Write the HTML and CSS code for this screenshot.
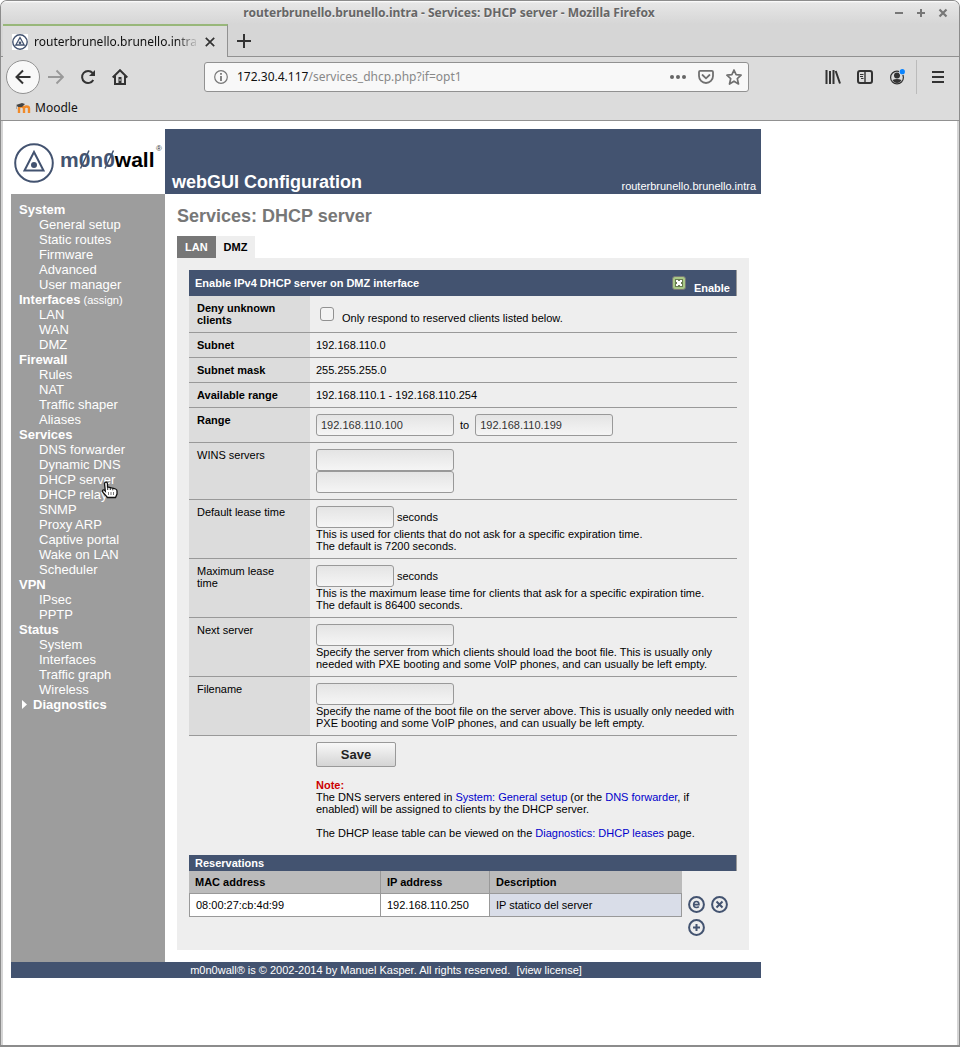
FILE: index.html
```html
<!DOCTYPE html>
<html lang="en">
<head>
<meta charset="utf-8">
<title>routerbrunello.brunello.intra - Services: DHCP server</title>
<link rel="stylesheet" href="styles.css">
</head>
<body>
<div class="window">
  <header class="chrome">
    <div class="titlebar">
      <span class="window-title">routerbrunello.brunello.intra - Services: DHCP server - Mozilla Firefox</span>
      <div class="window-buttons">
        <button type="button" aria-label="Minimize"><svg width="10" height="10" viewBox="0 0 10 10"><path d="M1 5h8" stroke="#777" stroke-width="2"/></svg></button>
        <button type="button" aria-label="Maximize"><svg width="10" height="10" viewBox="0 0 10 10"><path d="M1 5h8M5 1v8" stroke="#777" stroke-width="2"/></svg></button>
        <button type="button" aria-label="Close"><svg width="10" height="10" viewBox="0 0 10 10"><path d="M1.500 1.500l7 7M8.500 1.500l-7 7" stroke="#777" stroke-width="2.200"/></svg></button>
      </div>
    </div>
    <div class="tabstrip">
      <div class="browser-tab">
        <svg width="16" height="16" viewBox="0 0 16 16"><rect width="16" height="16" fill="#fff"/><circle cx="8" cy="8" r="7.200" fill="#fff" stroke="#435370" stroke-width="1.400"/><path d="M8 3.500L12.200 11H3.800z" fill="none" stroke="#435370" stroke-width="1.300"/><circle cx="8" cy="8.800" r="1.400" fill="#435370"/></svg>
        <span class="browser-tab-label">routerbrunello.brunello.intra -</span>
        <button type="button" aria-label="Close tab"><svg width="10" height="10" viewBox="0 0 10 10"><path d="M.8.8l8.400 8.400M9.200.8L.8 9.200" stroke="#333" stroke-width="1.700"/></svg></button>
      </div>
      <button class="new-tab" type="button" aria-label="New tab"><svg width="14" height="14" viewBox="0 0 14 14"><path d="M0 7h14M7 0v14" stroke="#333" stroke-width="2"/></svg></button>
    </div>
    <div class="navbar">
      <div class="nav-buttons">
        <button class="back" type="button" aria-label="Back"><svg width="16" height="16" viewBox="0 0 16 16" fill="none" stroke="#333" stroke-width="2"><path d="M15.500 8H1.500M8 1.500L1.500 8 8 14.500"/></svg></button>
        <button type="button" aria-label="Forward"><svg width="16" height="16" viewBox="0 0 16 16" fill="none" stroke="#999" stroke-width="1.900"><path d="M0 8h14.500M8.500 1.500L15 8l-6.500 6.500"/></svg></button>
        <button type="button" aria-label="Reload"><svg width="16" height="16" viewBox="0 0 16 16"><path d="M13.300 11A6 6 0 1 1 12.600 4" fill="none" stroke="#333" stroke-width="2"/><path d="M15 1v6H9z" fill="#333"/></svg></button>
        <button type="button" aria-label="Home"><svg width="16" height="16" viewBox="0 0 16 16"><path d="M.7 8.500L8 1.200l7.300 7.300M3 7v8h10V7" fill="none" stroke="#333" stroke-width="2"/><path d="M6.500 8h3v6.500h-3z" fill="#333"/><path d="M8 10v2" stroke="#ddd"/></svg></button>
      </div>
      <div class="urlbar">
        <svg width="14" height="14" viewBox="0 0 14 14"><circle cx="7" cy="7" r="6.300" fill="none" stroke="#777" stroke-width="1.200"/><path d="M7 6v5M7 3v1.700" stroke="#666" stroke-width="1.600"/></svg>
        <a class="url" href="#"><span>172.30.4.117</span>/services_dhcp.php?if=opt1</a>
        <svg width="16" height="16" viewBox="0 0 16 16" fill="#666"><circle cx="2" cy="8" r="2"/><circle cx="8" cy="8" r="2"/><circle cx="14" cy="8" r="2"/></svg>
        <svg width="16" height="16" viewBox="0 0 16 16" fill="none" stroke="#707070" stroke-width="1.800"><path d="M2.200 1.900h11.600q1.200 0 1.200 1.200V7a7 7 0 0 1-14 0V3.100q0-1.200 1.200-1.200z"/><path d="M4.500 6L8 9.300 11.500 6" stroke-linecap="round"/></svg>
        <svg width="16" height="16" viewBox="0 0 16 16" fill="none" stroke="#707070" stroke-width="1.700" stroke-linejoin="round"><path d="M8 1l2.100 4.700 5 .5-3.800 3.400L12.500 15 8 12.200 3.500 15l1.200-5.400L.9 6.200l5-.5z"/></svg>
      </div>
      <div class="tool-buttons">
        <button type="button" aria-label="Library"><svg width="16" height="16" viewBox="0 0 16 16"><path d="M1.500 1v14M5 2v13M8.500 1v14M10.700 2L15 14.500" fill="none" stroke="#333" stroke-width="2"/></svg></button>
        <button type="button" aria-label="Sidebars"><svg width="16" height="16" viewBox="0 0 16 16" fill="none" stroke="#333"><rect x="1" y="2" width="14" height="12" rx="2" stroke-width="2"/><path d="M8 2v12" stroke-width="1.400"/><path d="M3 5.500h3.500M3 7.500h3M4 9.500h2.500"/></svg></button>
        <button type="button" aria-label="Account"><svg width="16" height="16" viewBox="0 0 16 16"><circle cx="8" cy="8.500" r="6.400" fill="none" stroke="#333" stroke-width="1.200"/><circle cx="8" cy="6.500" r="3" fill="#333"/><path d="M3.500 11q4.500-2 9 0-1.500 3-4.500 3T3.500 11z" fill="#333"/><circle cx="13.300" cy="2.700" r="3.300" fill="#ddd"/><circle cx="13.300" cy="2.700" r="2.600" fill="#0a84ff"/></svg></button>
        <button class="menu" type="button" aria-label="Menu"><svg width="12" height="12" viewBox="0 0 12 12"><path d="M0 1h12M0 6h12M0 11h12" stroke="#333" stroke-width="2"/></svg></button>
      </div>
    </div>
    <div class="bookmarks">
      <a href="#"><svg width="16" height="12" viewBox="0 0 16 12"><path d="M4 11V6.500q0-2 2.300-2T9 6.500V11M9 6.500q0-2 2.500-2t2.500 2V11" fill="none" stroke="#f08a2a" stroke-width="2.400"/><path d="M1 3l6-2 3 1-3 3H3z" fill="#444"/><path d="M1.500 3v4" stroke="#aaa"/></svg>Moodle</a>
    </div>
  </header>

  <div class="page">
    <div class="site">
      <div class="logo">
        <svg width="150" height="44" viewBox="0 0 150 44" role="img" aria-label="m0n0wall">
          <circle cx="20" cy="23" r="18.800" fill="#fff" stroke="#435370" stroke-width="2"/>
          <path d="M20 12L29.500 30.500H10.500z" fill="none" stroke="#435370" stroke-width="2"/>
          <circle cx="20" cy="25" r="3" fill="#435370"/>
          <text class="logo-text" x="46" y="27"><tspan fill="#435370">m0n0</tspan><tspan>wall</tspan></text>
          <path d="M66.500 28.500l8.500-18M91 28.500l8.500-18" stroke="#435370" stroke-width="1.500"/>
          <text class="logo-mark" x="142" y="11">®</text>
        </svg>
      </div>
      <div class="banner"><span class="banner-title">webGUI Configuration</span><span class="hostname">routerbrunello.brunello.intra</span></div>

      <nav class="sidebar">
        <strong>System</strong>
        <ul><li><a href="#">General setup</a></li><li><a href="#">Static routes</a></li><li><a href="#">Firmware</a></li><li><a href="#">Advanced</a></li><li><a href="#">User manager</a></li></ul>
        <strong>Interfaces</strong><a class="assign" href="#">&nbsp;(assign)</a>
        <ul><li><a href="#">LAN</a></li><li><a href="#">WAN</a></li><li><a href="#">DMZ</a></li></ul>
        <strong>Firewall</strong>
        <ul><li><a href="#">Rules</a></li><li><a href="#">NAT</a></li><li><a href="#">Traffic shaper</a></li><li><a href="#">Aliases</a></li></ul>
        <strong>Services</strong>
        <ul><li><a href="#">DNS forwarder</a></li><li><a href="#">Dynamic DNS</a></li>
          <li class="pointed"><a href="#">DHCP server</a><svg class="pointer" width="18" height="18" viewBox="0 0 18 18"><path d="M3.500 2.500Q4 1 5.200 1.200T6.500 3v3l2 .3 2 .6 2 .5 2 .6q1.500.5 1.500 2V13l-1.500 3.500h-8L2 11.500Q1 9.500 2 9t2.300 1z" fill="#fff" stroke="#111" stroke-width="1.300"/><path d="M7.500 11v3M10 11v3M12.500 11v3" stroke="#666" stroke-width=".9"/><path d="M6.700 6v3M9.300 6.500V9M11.800 7.300v2" stroke="#111" stroke-width=".9"/></svg></li>
          <li><a href="#">DHCP relay</a></li><li><a href="#">SNMP</a></li><li><a href="#">Proxy ARP</a></li><li><a href="#">Captive portal</a></li><li><a href="#">Wake on LAN</a></li><li><a href="#">Scheduler</a></li></ul>
        <strong>VPN</strong>
        <ul><li><a href="#">IPsec</a></li><li><a href="#">PPTP</a></li></ul>
        <strong>Status</strong>
        <ul><li><a href="#">System</a></li><li><a href="#">Interfaces</a></li><li><a href="#">Traffic graph</a></li><li><a href="#">Wireless</a></li></ul>
        <a class="diagnostics" href="#"><svg width="11" height="9" viewBox="0 0 11 9"><path d="M3 0l5 4.500L3 9z" fill="#fff"/></svg><strong>Diagnostics</strong></a>
      </nav>

      <main class="content">
        <h1>Services: DHCP server</h1>
        <div class="tabs"><a href="#">LAN</a><a class="active" href="#">DMZ</a></div>
        <form class="panel">
          <table class="settings">
            <thead>
              <tr><th colspan="2"><div class="section"><span>Enable IPv4 DHCP server on DMZ interface</span><label class="enable"><input type="checkbox" checked><span>Enable</span></label></div></th></tr>
            </thead>
            <tbody>
              <tr><th class="required">Deny unknown clients</th><td><label class="deny"><input type="checkbox"><span>Only respond to reserved clients listed below.</span></label></td></tr>
              <tr><th class="required">Subnet</th><td>192.168.110.0</td></tr>
              <tr><th class="required">Subnet mask</th><td>255.255.255.0</td></tr>
              <tr><th class="required">Available range</th><td>192.168.110.1 - 192.168.110.254</td></tr>
              <tr><th class="required"><label for="from">Range</label></th><td><div class="line range"><input class="field" id="from" type="text" value="192.168.110.100"><label for="to">to</label><input class="field" id="to" type="text" value="192.168.110.199"></div></td></tr>
              <tr><th><label for="wins1">WINS servers</label></th><td><div class="line"><input class="field" id="wins1" type="text"></div><div class="line"><input class="field" type="text" aria-label="Second WINS server"></div></td></tr>
              <tr><th><label for="deftime">Default lease time</label></th><td><div class="line"><input class="field short" id="deftime" type="text">seconds</div>This is used for clients that do not ask for a specific expiration time.<br>The default is 7200 seconds.</td></tr>
              <tr><th><label for="maxtime">Maximum lease time</label></th><td><div class="line"><input class="field short" id="maxtime" type="text">seconds</div>This is the maximum lease time for clients that ask for a specific expiration time.<br>The default is 86400 seconds.</td></tr>
              <tr><th><label for="next">Next server</label></th><td><div class="line"><input class="field" id="next" type="text"></div>Specify the server from which clients should load the boot file. This is usually only needed with PXE booting and some VoIP phones, and can usually be left empty.</td></tr>
              <tr><th><label for="file">Filename</label></th><td><div class="line"><input class="field" id="file" type="text"></div>Specify the name of the boot file on the server above. This is usually only needed with PXE booting and some VoIP phones, and can usually be left empty.</td></tr>
            </tbody>
          </table>
          <div class="actions">
            <button class="save" type="button">Save</button>
            <p><strong class="note">Note:</strong><br>The DNS servers entered in <a href="#">System: General setup</a> (or the <a href="#">DNS forwarder</a>, if enabled) will be assigned to clients by the DHCP server.</p>
            <p>The DHCP lease table can be viewed on the <a href="#">Diagnostics: DHCP leases</a> page.</p>
          </div>
          <table class="reservations">
            <colgroup><col class="mac"><col class="ip"><col><col class="tools"></colgroup>
            <thead>
              <tr><th class="caption" colspan="4">Reservations</th></tr>
              <tr class="heads"><th>MAC address</th><th>IP address</th><th>Description</th><td></td></tr>
            </thead>
            <tbody>
              <tr class="entry"><td>08:00:27:cb:4d:99</td><td>192.168.110.250</td><td class="description">IP statico del server</td>
                <td class="icons"><div>
                  <a href="#" aria-label="Edit"><svg width="17" height="17" viewBox="0 0 17 17" fill="none" stroke="#435370" stroke-width="2"><circle cx="8.500" cy="8.500" r="7.400"/><path d="M5.500 8.600h5.400Q11 5.500 8.400 5.500T5.700 8.500t2.800 3q1.500 0 2.300-1.100" stroke-width="1.700"/></svg></a>
                  <a href="#" aria-label="Delete"><svg width="17" height="17" viewBox="0 0 17 17" fill="none" stroke="#435370" stroke-width="2"><circle cx="8.500" cy="8.500" r="7.400"/><path d="M5.500 5.500l6 6M11.500 5.500l-6 6"/></svg></a>
                </div></td></tr>
              <tr><td colspan="3"></td>
                <td class="icons add"><div><a href="#" aria-label="Add"><svg width="17" height="17" viewBox="0 0 17 17" fill="none" stroke="#435370" stroke-width="2"><circle cx="8.500" cy="8.500" r="7.400"/><path d="M5 8.500h7M8.500 5v7"/></svg></a></div></td></tr>
            </tbody>
          </table>
        </form>
      </main>
      <footer>m0n0wall® is © 2002-2014 by Manuel Kasper. All rights reserved. &nbsp;<a href="#">[view license]</a></footer>
    </div>
  </div>
</div>
</body>
</html>
```
FILE: styles.css
```css
* { box-sizing: border-box; }
html, body { height: 100%; }
body { margin: 0; background: #fff; color: #000; font: 11px/12px "Liberation Sans", Arial, sans-serif; }
button { border: 0; padding: 0; background: none; display: flex; align-items: center; justify-content: center; }
svg { display: block; flex: none; }
a { text-decoration: none; }

.window { min-height: 100%; display: flex; flex-direction: column; border: 1px solid #8c8c8c; border-bottom-width: 2px; border-radius: 7px 7px 0 0; background: #d5d5d5; overflow: hidden; }
.chrome { font: 12px/18px "Noto Sans", sans-serif; background: #dcdcdc; border-bottom: 1px solid #919191; }

.titlebar { height: 23px; display: flex; align-items: center; padding: 0 11px 0 3px; background: linear-gradient(#fff, #e6e6e6 2px, #d6d6d6); }
.window-title { flex: 1; text-align: center; font-weight: 700; color: #666; text-shadow: 0 1px #eee; }
.window-buttons { display: flex; gap: 12px; }

.tabstrip { height: 33px; display: flex; background: linear-gradient(#919191, #919191) bottom / 100% 1px no-repeat #d6d6d6; padding-left: 2px; }
.browser-tab { width: 225px; display: flex; align-items: center; gap: 6px; padding: 0 12px 0 9px; background: #dcdcdc; border-top: 2px solid #98b77a; border-right: 1px solid #919191; }
.browser-tab-label { flex: 1; overflow: hidden; white-space: nowrap; color: #111; -webkit-mask-image: linear-gradient(to right, #000 86%, transparent); mask-image: linear-gradient(to right, #000 86%, transparent); }
.new-tab { width: 32px; }

.navbar { height: 40px; display: flex; align-items: center; padding: 0 15px 0 5px; }
.nav-buttons { display: flex; align-items: center; gap: 16px; width: 198px; flex: none; }
.back { width: 34px; height: 34px; border: 1px solid #919191; border-radius: 50%; background: #f8f8f8; }
.back + button { margin-left: -8px; }
.urlbar { flex: 1; height: 30px; display: flex; align-items: center; gap: 12px; padding: 0 6px 0 9px; background: #f8f8f8; border: 1px solid #919191; border-radius: 3px; }
.url { flex: 1; margin-left: -3px; color: #888; }
.url span { color: #111; }
.tool-buttons { flex: none; width: 195px; display: flex; align-items: center; justify-content: flex-end; gap: 16px; }
.menu { height: 34px; margin-left: -5px; padding-left: 15px; border-left: 1px solid #bbb; }
.bookmarks { height: 23px; padding: 2px 14px; }
.bookmarks a { display: inline-flex; align-items: center; gap: 4px; color: #111; }

.page { flex: 1; margin: 0 2px; padding: 8px; background: #fff; }
.site { max-width: 750px; display: grid; grid-template-columns: 154px 1fr; grid-template-rows: 65px auto auto; }
.logo { padding: 11px 0 0 3px; }
.logo-text { font: 700 21px "Liberation Sans", Arial, sans-serif; }
.logo-mark { font-size: 8px; fill: #333; }
.banner { display: flex; align-items: flex-end; justify-content: space-between; padding: 0 5px 1px 7px; background: #435370; color: #fff; }
.banner-title { font-size: 18px; line-height: 22px; font-weight: 700; }
.hostname { line-height: 14px; }

.sidebar { padding: 8px; background: #9d9d9d; color: #fff; font-size: 13px; line-height: 15px; }
.sidebar ul { margin: 0; padding: 0 0 0 20px; list-style: none; }
.sidebar a { color: #fff; }
.sidebar .assign { font-size: 11px; line-height: 11px; }
.diagnostics { display: flex; align-items: center; gap: 3px; }
.pointed { position: relative; }
.pointer { position: absolute; left: 62px; top: 9px; z-index: 1; }

.content { padding: 12px; }
h1 { margin: 0 0 10px; font-size: 18px; line-height: 20px; color: #777; }
.tabs { display: flex; font-weight: 700; }
.tabs a { padding: 5px 8px; background: #777; color: #fff; }
.tabs .active { background: #eee; color: #000; }
.panel { padding: 12px; background: #eee; }

table { width: 100%; border-collapse: separate; border-spacing: 0; table-layout: fixed; }
th, td { text-align: left; vertical-align: top; }
.settings { display: grid; }
.settings thead, .settings tbody, .settings thead tr, .settings thead th { display: block; padding: 0; }
.settings tbody tr { display: grid; grid-template-columns: 121px 1fr; }
.section { height: 26px; display: flex; align-items: center; justify-content: space-between; padding: 0 6px; background: #435370; color: #fff; border-right: 1px solid #999; }
.settings tbody th { padding: 6px 24px 6px 8px; background: #dcdcdc; border-bottom: 1px solid #999; font-weight: 400; }
.settings tbody .required { font-weight: 700; }
.settings tbody td { padding: 6px 0 6px 6px; border-bottom: 1px solid #999; }

input[type="checkbox"] { appearance: none; margin: 0; width: 14px; height: 14px; border: 1px solid #919191; border-radius: 3px; background: #f3f3f3; flex: none; }
.enable { display: flex; align-items: flex-end; gap: 8px; }
.enable input { margin-bottom: 1px; }
.enable span { margin-bottom: -3px; }
.enable input:checked { border-color: #777; background: linear-gradient(45deg, transparent 34%, #fff 34% 66%, transparent 66%) center / 6px 6px no-repeat, linear-gradient(-45deg, transparent 34%, #fff 34% 66%, transparent 66%) center / 6px 6px no-repeat, linear-gradient(#697c52, #697c52) center / 8px 8px no-repeat, #a9c886; }
.deny { display: flex; align-items: flex-end; gap: 8px; height: 22px; padding-left: 4px; }
.deny input { margin-bottom: 3px; }
.line { display: flex; align-items: center; gap: 3px; }
.range { gap: 6px; }
.field { width: 138px; height: 22px; margin: 0; padding: 0 4px; border: 1px solid #999; border-radius: 3px; background: linear-gradient(#e4e4e4, #f5f5f5); color: #333; font: inherit; }
.short { width: 78px; }

.actions { padding: 6px 6px 16px 127px; }
.save { width: 80px; height: 25px; border: 1px solid #999; border-radius: 2px; background: linear-gradient(#f8f8f8, #d4d4d4); color: #222; font: 700 13px/15px "Liberation Sans", Arial, sans-serif; }
.actions p { margin: 12px 0 0; }
.actions a { color: #0000cc; }
.note { color: #c00; }

.mac { width: 192px; }
.ip { width: 109px; }
.tools { width: 55px; }
.reservations .caption { padding: 2px 6px; background: #435370; color: #fff; border-right: 1px solid #999; }
.reservations .heads th { height: 22px; padding: 5px 6px; background: #bbb; border-right: 1px solid #999; }
.reservations .heads th:nth-child(3) { border-right-color: #bbb; }
.entry td:not(.icons) { padding: 5px 6px; background: #fff; border: solid #999; border-width: 1px 1px 1px 0; }
.entry td:first-child { border-left-width: 1px; }
.entry .description:not(.icons) { background: #d9dde8; }
.reservations .icons { padding: 3px 0 3px 6px; }
.reservations .add { padding: 2px 0 2px 6px; }
.icons div { display: flex; gap: 6px; }

footer { grid-column: 1 / -1; padding: 2px; background: #435370; color: #fff; text-align: center; }
footer a { color: #fff; }
```
